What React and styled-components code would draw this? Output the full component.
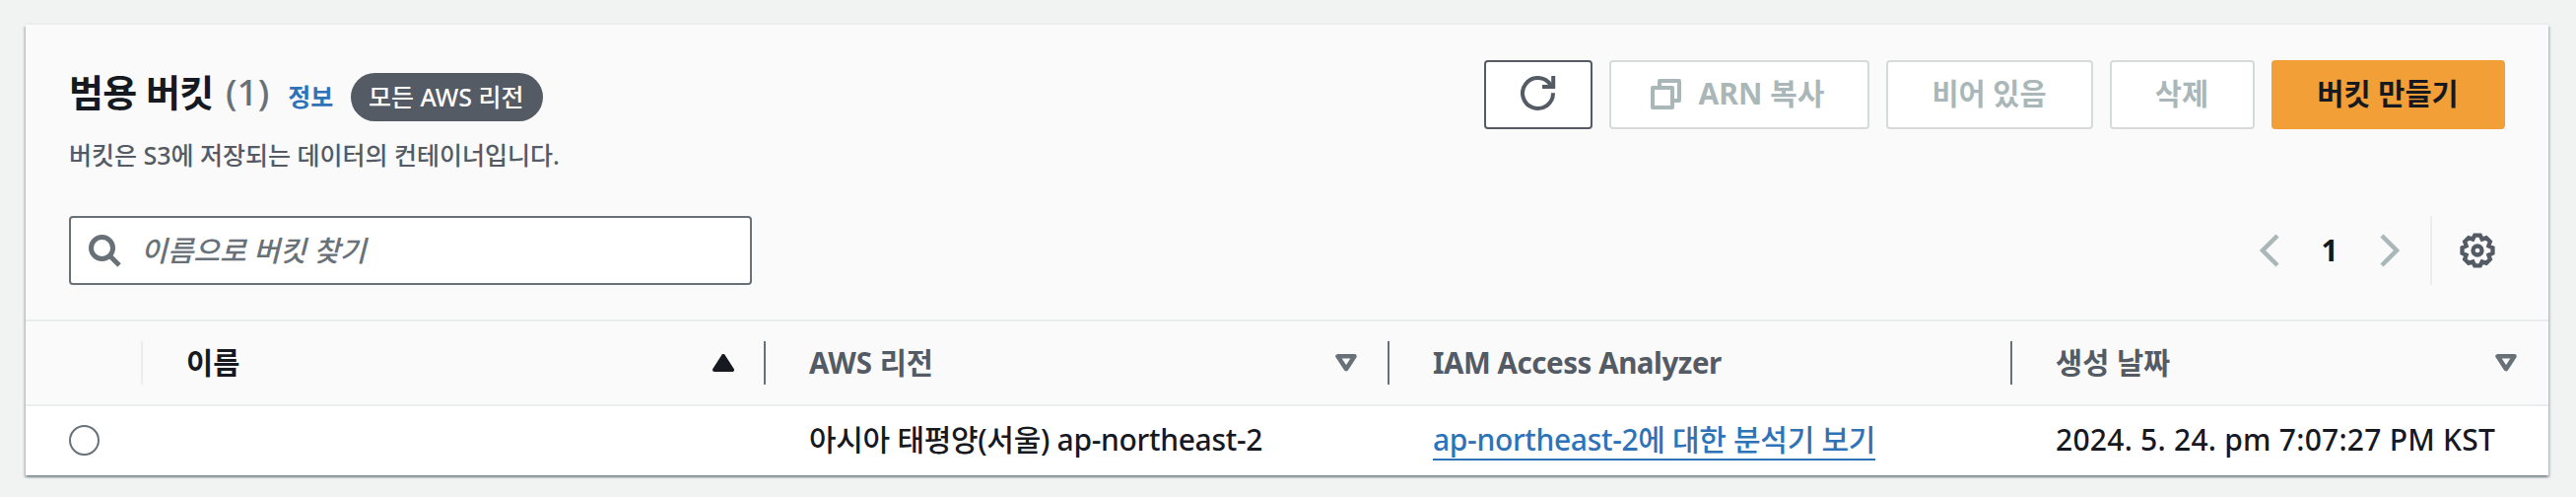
import React from "react";
import styled, { createGlobalStyle } from "styled-components";

const Global = createGlobalStyle`
  *, *::before, *::after { box-sizing: border-box; }
  body {
    margin: 0;
    background: #f1f3f3;
    font-family: "Noto Sans", "Noto Sans CJK KR", sans-serif;
    color: #16191f;
  }
`;

const Page = styled.main`
  height: 504px;
  padding: 25px 28px 22px 26px;
  background: #f1f3f3;
`;

const Panel = styled.section`
  height: 457px;
  display: flex;
  flex-direction: column;
  background: #fafafa;
  box-shadow: 0 -2px 0 #eaeded, 0 2px 2px rgba(0, 28, 36, 0.3), 2px 2px 2px rgba(0, 28, 36, 0.15),
    -2px 2px 2px rgba(0, 28, 36, 0.15);
`;

const Header = styled.header`
  display: flex;
  justify-content: space-between;
  height: 194px;
  padding: 36px 44px 0;
`;

const TitleRow = styled.div`
  display: flex;
  align-items: center;
  height: 74px;
`;

const Text = styled.span`
  display: block;
  white-space: pre;
  font-size: ${(p) => p.$size || 29.5}px;
  font-weight: ${(p) => p.$weight || 500};
  line-height: ${(p) => p.$lh || 44}px;
  letter-spacing: ${(p) => p.$track || 0}px;
  color: ${(p) => p.$color || "#16191f"};
  font-style: ${(p) => (p.$italic ? "italic" : "normal")};
`;

const Title = styled.h2`
  display: flex;
  gap: 3px;
  margin: 0 19px 11px 0;
  font-weight: 400;
`;

const InfoLink = styled.a`
  margin: 0 18px 1px 0;
`;

const Pill = styled.span`
  display: flex;
  align-items: center;
  justify-content: center;
  width: 195px;
  height: 49px;
  margin-top: 1px;
  padding: 0 2px 2px 0;
  border-radius: 25px;
  background: #545b64;
`;

const Actions = styled.div`
  display: flex;
  gap: 17px;
`;

const Button = styled.button`
  display: flex;
  align-items: center;
  justify-content: center;
  gap: 18px;
  width: ${(p) => p.$w}px;
  height: 70px;
  padding: 0 1px 2px 0;
  border: 2px solid ${(p) => p.$border || "#d5dbdb"};
  border-radius: 4px;
  background: ${(p) => p.$bg || "#fff"};
  font-family: inherit;
`;

const CopyButton = styled(Button)`
  padding-right: 4px;
`;

const Toolbar = styled.div`
  display: flex;
  justify-content: space-between;
  height: 105px;
  padding: 0 44px;
`;

const Search = styled.div`
  display: flex;
  align-items: center;
  gap: 20px;
  width: 693px;
  height: 70px;
  padding-left: 18px;
  border: 2px solid #687078;
  border-radius: 4px;
  background: #fff;
`;

const Pager = styled.nav`
  display: flex;
  align-items: center;
  height: 70px;
`;

const PageNumber = styled.div`
  width: 102px;
  display: flex;
  justify-content: center;
`;

const Settings = styled.div`
  display: flex;
  align-items: center;
  height: 70px;
  margin-left: 31px;
  padding: 0 10px 0 28px;
  border-left: 2px solid #eaeded;
`;

const Row = styled.div`
  display: grid;
  grid-template-columns: 119px 632px 633px 632px 544px;
  align-items: center;
`;

const HeadRow = styled(Row)`
  height: 88px;
  border-top: 2px solid #eaeded;
  border-bottom: 2px solid #eaeded;
`;

const BodyRow = styled(Row)`
  height: 70px;
  background: #fff;
`;

const HeadCell = styled.div`
  display: flex;
  align-items: center;
  justify-content: space-between;
  height: 44px;
  padding: 0 ${(p) => p.$end ?? 31}px 0 44px;
  border-right: ${(p) => (p.$line ? `2px solid ${p.$line}` : "0")};
`;

const Cell = styled.div`
  padding-left: 44px;
`;

const TextCell = styled(Cell)`
  padding-bottom: 2px;
`;

const Radio = styled.div`
  width: 31px;
  height: 31px;
  margin-bottom: 1px;
  border: 2px solid #687078;
  border-radius: 50%;
  background: #fff;
`;

const Link = styled.a`
  display: block;
  width: fit-content;
  border-bottom: 2px solid #2e73b8;
`;

const RefreshIcon = () => (
  <svg width="36" height="36" viewBox="0 0 36 36" fill="none" stroke="#545b64" strokeWidth="4">
    <path d="M33 17.3A15.500 15.500 0 1 1 30.600 9.200" />
    <path d="M33.200 0v11H22" />
  </svg>
);

const CopyIcon = () => (
  <svg width="31" height="31" viewBox="0 0 31 31" fill="none" stroke="#aab7b8" strokeWidth="4" strokeLinejoin="round">
    <path d="M2 9h20v20H2z" />
    <path d="M9 8V2h20v20h-6" />
  </svg>
);

const SearchIcon = () => (
  <svg width="33" height="33" viewBox="0 0 33 33" fill="none" stroke="#687078" strokeWidth="5">
    <circle cx="13.500" cy="13.500" r="11" />
    <path d="M21.500 21.500L31 31" />
  </svg>
);

const Chevron = ({ right }) => (
  <svg width="20" height="34" viewBox="0 0 20 34" fill="none" stroke="#aab7b8" strokeWidth="4.500">
    <path d={right ? "M2 2l15 15L2 32" : "M18 2L3 17l15 15"} />
  </svg>
);

const Sort = ({ up }) => (
  <svg width="22" height="18" viewBox="0 0 22 18" strokeLinejoin="round">
    {up ? (
      <path d="M11 2L20 16H2z" fill="#16191f" stroke="#16191f" strokeWidth="4" />
    ) : (
      <path d="M2.500 2.300h17L11 15.200z" fill="none" stroke="#687078" strokeWidth="4.500" />
    )}
  </svg>
);

const polar = (radius, degrees) => {
  const a = (degrees * Math.PI) / 180;
  return `${(18 + radius * Math.cos(a)).toFixed(2)},${(18 + radius * Math.sin(a)).toFixed(2)}`;
};

const gearPoints = Array.from({ length: 8 }, (_, i) => i * 45)
  .map((a) => [polar(15.7, a - 10), polar(15.7, a + 10), polar(12.3, a + 22.5)].join(" "))
  .join(" ");

const Gear = () => (
  <svg width="36" height="36" viewBox="0 0 36 36" fill="none" stroke="#545b64" strokeWidth="4.300">
    <polygon points={gearPoints} />
    <circle cx="18" cy="18" r="4.500" />
  </svg>
);

const Head = ({ label, sorted, sort, line, end, track }) => (
  <HeadCell $line={line} $end={end}>
    <Text $weight={700} $track={track} $color={sorted ? "#16191f" : "#545b64"}>{label}</Text>
    {sort && <Sort up={sorted} />}
  </HeadCell>
);

export default function App() {
  return (
    <>
      <Global />
      <Page>
        <Panel>
          <Header>
            <div>
              <TitleRow>
                <Title>
                  <Text $size={38} $track={-0.6} $weight={700}>범용 버킷 </Text>
                  <Text $size={37} $color="#687078">(1)</Text>
                </Title>
                <InfoLink><Text $size={25} $weight={700} $color="#2e73b8">정보</Text></InfoLink>
                <Pill><Text $size={25} $color="#fff">모든 AWS 리전</Text></Pill>
              </TitleRow>
              <Text $size={25} $color="#545b64">버킷은 S3에 저장되는 데이터의 컨테이너입니다.</Text>
            </div>
            <Actions>
              <Button $w={110} $border="#545b64"><RefreshIcon /></Button>
              <CopyButton $w={264}><CopyIcon /><Text $size={30} $weight={700} $color="#aab7b8">ARN 복사</Text></CopyButton>
              <Button $w={210}><Text $weight={700} $color="#aab7b8">비어 있음</Text></Button>
              <Button $w={147}><Text $weight={700} $color="#aab7b8">삭제</Text></Button>
              <Button $w={237} $bg="#f29f38" $border="#f29f38"><Text $weight={700}>버킷 만들기</Text></Button>
            </Actions>
          </Header>
          <Toolbar>
            <Search>
              <SearchIcon />
              <Text $size={29} $italic $color="#687078">이름으로 버킷 찾기</Text>
            </Search>
            <Pager>
              <Chevron />
              <PageNumber><Text $size={30} $weight={700}>1</Text></PageNumber>
              <Chevron right />
              <Settings><Gear /></Settings>
            </Pager>
          </Toolbar>
          <HeadRow>
            <HeadCell $line="#eaeded" />
            <Head label="이름" sorted sort line="#687078" end={30} />
            <Head label="AWS 리전" sort line="#687078" />
            <Head label="IAM Access Analyzer" line="#687078" track={-0.45} />
            <Head label="생성 날짜" sort end={32} />
          </HeadRow>
          <BodyRow>
            <Cell><Radio /></Cell>
            <Cell />
            <TextCell><Text $size={30} $lh={38} $track={-0.3}>아시아 태평양(서울) ap-northeast-2</Text></TextCell>
            <Cell><Link><Text $size={30} $lh={38} $track={-0.32} $color="#2e73b8">ap-northeast-2에 대한 분석기 보기</Text></Link></Cell>
            <TextCell><Text $size={30} $lh={38} $track={0.25}>2024. 5. 24. pm 7:07:27 PM KST</Text></TextCell>
          </BodyRow>
        </Panel>
      </Page>
    </>
  );
}
